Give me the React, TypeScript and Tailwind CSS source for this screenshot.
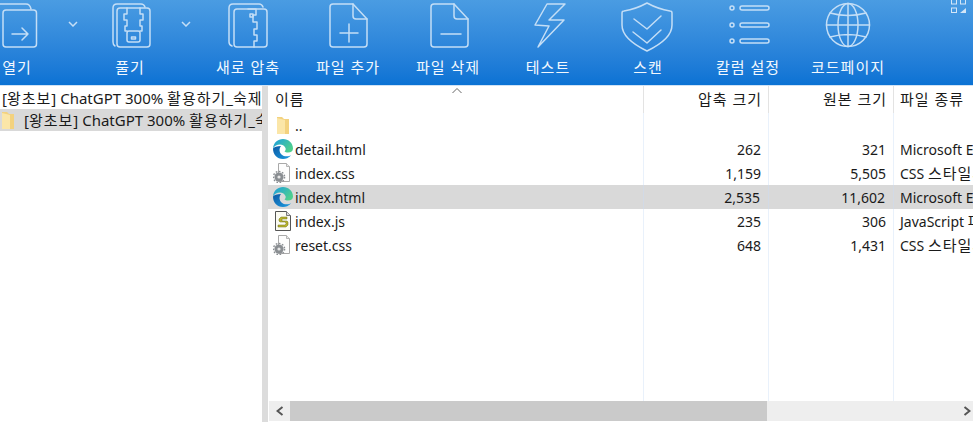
import type { ReactNode } from "react";

const FONT = "font-['Noto_Sans','Noto_Sans_CJK_KR',sans-serif]";

function Line({ children, w = 48, minX = 0 }: { children: ReactNode; w?: number; minX?: number }) {
  return (
    <svg width={w} height="48" viewBox={`${minX} 0 ${w} 48`} fill="none" stroke="#c4def6" strokeWidth="1.5" strokeLinejoin="round" strokeLinecap="round" className="overflow-visible">
      {children}
    </svg>
  );
}

const OpenIcon = () => (
  <Line minX={-7}>
    <path d="M-6 4h32q4 0 5 5" />
    <rect x="3" y="10" width="33.5" height="37" rx="3" />
    <path d="M12 34h16M22 28l6 6-6 6" />
  </Line>
);

const ExtractIcon = () => (
  <Line minX={4}>
    <path d="M13 46q-2-1-2-4V8q0-4 4-4h24q3 0 4 3" />
    <rect x="15" y="8" width="33" height="39" rx="3" />
    <path d="M25 8v6h-3v6h3v6h-2v5h2M38 8v6h3v6h-3v6h2v5h-2" />
    <rect x="25" y="31" width="13" height="11" rx="2" />
    <rect x="29.5" y="37" width="4" height="2" />
  </Line>
);

const NewZipIcon = () => (
  <Line minX={1}>
    <path d="M9 46q-3-1-3-4V8q0-4 4-4h26q3 0 4 3" />
    <rect x="11" y="9" width="33" height="38" rx="3" />
    <path d="M25 9h8v6h-3v7h4v7h-3v6h3v6h-3v6" />
    <rect x="27" y="14" width="3" height="3" />
  </Line>
);

const AddIcon = () => (
  <Line minX={5}>
    <path d="M14 4h20l14 15v25q0 3-3 3H14q-3 0-3-3V7q0-3 3-3z" />
    <path d="M34 4v12q0 3 3 3h11" />
    <path d="M30 24v18M21 33h18" />
  </Line>
);

const RemoveIcon = () => (
  <Line minX={4}>
    <path d="M14 4h20l14 15v25q0 3-3 3H14q-3 0-3-3V7q0-3 3-3z" />
    <path d="M34 4v12q0 3 3 3h11" />
    <path d="M21 34h20" />
  </Line>
);

const TestIcon = () => (
  <Line>
    <path d="M23 4h18L25 20h15L14 47l11-21-14-1z" />
  </Line>
);

const ScanIcon = () => (
  <Line w={56}>
    <path d="M27 3q11 6 23 8q2 0 2 2v12q0 14-25 26Q2 39 2 25V13q0-2 2-2 12-2 23-8z" />
    <path d="M14 19l13 10 14-13M13 32l14 11 14-13" />
  </Line>
);

const ColumnsIcon = () => (
  <Line minX={-3}>
    <circle cx="5" cy="8" r="2" />
    <circle cx="5" cy="25" r="2" />
    <circle cx="5" cy="41" r="2" />
    <rect x="13" y="6" width="29" height="4" rx="2" />
    <rect x="13" y="23" width="29" height="4" rx="2" />
    <rect x="13" y="39" width="29" height="4" rx="2" />
  </Line>
);

const GlobeIcon = () => (
  <Line>
    <circle cx="24" cy="25" r="21.5" />
    <ellipse cx="24" cy="25" rx="10" ry="21.5" />
    <path d="M24 3.5v43M2.5 25h43M6 13q18 5 36 0M6 37q18-5 36 0" />
  </Line>
);

const Chevron = () => (
  <svg width="10" height="6" viewBox="0 0 10 6" fill="none" stroke="#c4def6" strokeWidth="1.5">
    <path d="M1 1l4 4 4-4" />
  </svg>
);

const GridIcon = () => (
  <svg width="15" height="13" viewBox="0 0 15 13" fill="none" stroke="#d3e6f7">
    <rect x=".5" y="-1" width="5" height="5" />
    <rect x="9.5" y="-1" width="5" height="5" />
    <rect x=".5" y="8" width="5" height="4.5" />
    <path d="M9 13l6-5v5z" fill="#d3e6f7" stroke="none" />
  </svg>
);

function FolderIcon() {
  return (
    <svg width="12" height="17" viewBox="0 0 12 17" className="shrink-0">
      <path d="M0 0h5l2 2h5v15H0z" fill="#f3d27f" />
      <path d="M0 1l8 2v14H0z" fill="#fbe6a8" />
    </svg>
  );
}

function EdgeIcon() {
  return (
    <svg width="22" height="22" viewBox="0 0 22 22">
      <defs>
        <linearGradient id="edgeTop" x1="0" y1="0" x2="1" y2="0.6">
          <stop offset="0" stopColor="#1b9de2" />
          <stop offset="1" stopColor="#4fd08c" />
        </linearGradient>
        <linearGradient id="edgeBottom" x1="0" y1="0" x2="1" y2="1">
          <stop offset="0" stopColor="#0c59a4" />
          <stop offset="1" stopColor="#1b9de2" />
        </linearGradient>
      </defs>
      <path d="M1 10.5C1.5 4.5 6 1 11 1c5.5 0 10 4 10 9.5 0 2.5-2 4-5 4-1.5 0-3-.5-3.5-1 1-1 1.5-2 1-3.5C12.5 7.5 10 6.5 8 6.5c-3 0-5.5 1.500-7 4z" fill="url(#edgeTop)" />
      <path d="M1 10.500C1 16.500 5 21 11 21c3 0 5.500-1 8-3.500-.2 0-.5.2-1 .3-3 1-6.500.7-8.500-1.300C7 14 7 10.500 9 8 5 8 2 9 1 10.500z" fill="url(#edgeBottom)" />
    </svg>
  );
}

function CssIcon() {
  return (
    <svg width="20" height="20" viewBox="0 0 20 20">
      <path d="M5.5 .5h8l3 3v15h-11z" fill="#fdfdfd" stroke="#a9a9a9" />
      <path d="M13.5 .5v3h3" fill="#e8e8e8" stroke="#b5b5b5" />
      <circle cx="6" cy="14" r="4.6" fill="#8a8e92" />
      <circle cx="6" cy="14" r="5.6" fill="none" stroke="#8a8e92" strokeWidth="1.4" strokeDasharray="1.6 1.6" />
      <circle cx="6" cy="14" r="1.6" fill="#e6e6e6" />
    </svg>
  );
}

function JsIcon() {
  return (
    <svg width="18" height="20" viewBox="0 0 18 20">
      <path d="M1.5 .5h11l4 4v15h-15z" fill="#fbfbf2" stroke="#555" />
      <path d="M12.5 .5v4h4" fill="#ddd" stroke="#777" />
      <path d="M13 6H7L5 8v2l1 1h5l1 1v1l-1 1H4v2h8l2-2v-3l-1-1H8V8h5z" fill="#b9b52d" stroke="#6f6c18" strokeWidth=".5" />
    </svg>
  );
}

// Hangul in the reference runs wider than the Latin beside it
function Ko({ children }: { children: ReactNode }) {
  return <span className="text-[15px] tracking-[1px]">{children}</span>;
}

const TOOLS = [
  { label: "열기", icon: <OpenIcon />, width: "w-[40px]", slot: "w-[56px] pr-[15px]" },
  { label: "풀기", icon: <ExtractIcon />, width: "w-[74px]", slot: "w-[31px] pr-[7px]" },
  { label: "새로 압축", icon: <NewZipIcon />, width: "w-[100px]" },
  { label: "파일 추가", icon: <AddIcon />, width: "w-[100px]" },
  { label: "파일 삭제", icon: <RemoveIcon />, width: "w-[100px]" },
  { label: "테스트", icon: <TestIcon />, width: "w-[100px]" },
  { label: "스캔", icon: <ScanIcon />, width: "w-[100px]" },
  { label: "칼럼 설정", icon: <ColumnsIcon />, width: "w-[100px]" },
  { label: "코드페이지", icon: <GlobeIcon />, width: "w-[100px]" },
];

const EDGE_TYPE = "Microsoft Edge HTML Document";
const CSS_TYPE = <>CSS <Ko>스타일시트</Ko></>;

const FILES = [
  { name: "..", icon: <FolderIcon />, packed: "", size: "", type: "" as ReactNode },
  { name: "detail.html", icon: <EdgeIcon />, packed: "262", size: "321", type: EDGE_TYPE },
  { name: "index.css", icon: <CssIcon />, packed: "1,159", size: "5,505", type: CSS_TYPE },
  { name: "index.html", icon: <EdgeIcon />, packed: "2,535", size: "11,602", type: EDGE_TYPE, selected: true },
  { name: "index.js", icon: <JsIcon />, packed: "235", size: "306", type: <>JavaScript <Ko>파일</Ko></> },
  { name: "reset.css", icon: <CssIcon />, packed: "648", size: "1,431", type: CSS_TYPE },
];

function NumberColumn({ title, field }: { title: string; field: "packed" | "size" }) {
  return (
    <div className="w-[125px] shrink-0 flex flex-col border-r border-[#e9f1fb]">
      <div className="h-[27px] -mr-px border-r border-[#e3e3e3] flex items-center justify-end pr-[6px]">
        <Ko>{title}</Ko>
      </div>
      {FILES.map((file) => (
        <div key={file.name} className={`h-6 -mr-px flex items-center justify-end pr-2 ${file.selected ? "bg-[#d9d9d9] border-r border-[#d2dae6]" : ""}`}>
          {file[field]}
        </div>
      ))}
    </div>
  );
}

export default function App() {
  return (
    <div className={`${FONT} w-[973px] h-[422px] overflow-hidden flex flex-col bg-white text-[14px] text-[#1a1a1a]`}>
      <header className="h-[86px] shrink-0 flex items-start justify-between overflow-hidden border-b border-[#cfe2f5] bg-gradient-to-b from-[#4a9ce2] to-[#0a72d4] text-[#f2f8fe]">
        <div className="flex -ml-[3px] -mt-[1px]">
          {TOOLS.map((tool) => (
            <div key={tool.label} className="flex">
              <div className={`${tool.width} flex flex-col items-center`}>
                <div className="h-[50px] flex items-center">{tool.icon}</div>
                <div className="mt-[8px] leading-5 whitespace-nowrap">
                  <Ko>{tool.label}</Ko>
                </div>
              </div>
              {tool.slot && (
                <div className={`${tool.slot} h-[50px] flex items-center justify-end`}>
                  <Chevron />
                </div>
              )}
            </div>
          ))}
        </div>
        <div className="mr-[7px]">
          <GridIcon />
        </div>
      </header>

      <div className="flex-1 flex min-h-0">
        <aside className="w-[262px] shrink-0 overflow-hidden pt-[1px] text-[15px]">
          <div className="h-[22px] pl-[2px] flex items-center whitespace-nowrap overflow-hidden">
            <span>[<Ko>왕초보</Ko>] ChatGPT 300% <Ko>활용하기</Ko>_<Ko>숙제</Ko></span>
          </div>
          <div className="h-[22px] pl-[2px] flex items-center gap-[10px] whitespace-nowrap overflow-hidden bg-[#d9d9d9]">
            <FolderIcon />
            <span>[<Ko>왕초보</Ko>] ChatGPT 300% <Ko>활용하기</Ko>_<Ko>숙제</Ko></span>
          </div>
        </aside>
        <div className="w-[6px] shrink-0 bg-[#dcdcdc]" />

        <main className="flex-1 min-w-0 flex flex-col">
          <div className="flex-1 flex min-h-0 overflow-hidden">
            <div className="w-[376px] shrink-0 relative flex flex-col border-r border-[#e9f1fb]">
              <div className="h-[27px] -mr-px border-r border-[#e3e3e3] flex items-center pl-[7px]">
                <Ko>이름</Ko>
              </div>
              <svg className="absolute left-[184px] top-[2px]" width="10" height="5" viewBox="0 0 10 5" fill="none" stroke="#666">
                <path d="M.5 5l4.500-4.500L9.500 5" />
              </svg>
              {FILES.map((file) => (
                <div key={file.name} className={`h-6 -mr-px flex items-center pl-[4px] ${file.selected ? "bg-[#d9d9d9] border-r border-[#d2dae6]" : ""}`}>
                  <span className="w-[22px] flex justify-center shrink-0">{file.icon}</span>
                  <span className="ml-[1px]">{file.name}</span>
                </div>
              ))}
            </div>
            <NumberColumn title="압축 크기" field="packed" />
            <NumberColumn title="원본 크기" field="size" />
            <div className="flex-1 min-w-0 flex flex-col overflow-hidden whitespace-nowrap">
              <div className="h-[27px] flex items-center pl-[6px]">
                <Ko>파일 종류</Ko>
              </div>
              {FILES.map((file) => (
                <div key={file.name} className={`h-6 flex items-center pl-[6px] ${file.selected ? "bg-[#d9d9d9]" : ""}`}>
                  <span>{file.type}</span>
                </div>
              ))}
            </div>
          </div>

          <div className="h-5 mb-px ml-px shrink-0 flex bg-[#eeeeee]">
            <div className="w-[21px] flex items-center justify-center">
              <svg width="8" height="10" viewBox="0 0 8 10" fill="none" stroke="#555" strokeWidth="2">
                <path d="M6.5 1l-5 4 5 4" />
              </svg>
            </div>
            <div className="w-[477px] bg-[#cacaca]" />
            <div className="flex-1 flex items-center justify-end pr-[2px]">
              <svg width="8" height="10" viewBox="0 0 8 10" fill="none" stroke="#555" strokeWidth="2">
                <path d="M1.5 1l5 4-5 4" />
              </svg>
            </div>
          </div>
        </main>
      </div>
    </div>
  );
}
